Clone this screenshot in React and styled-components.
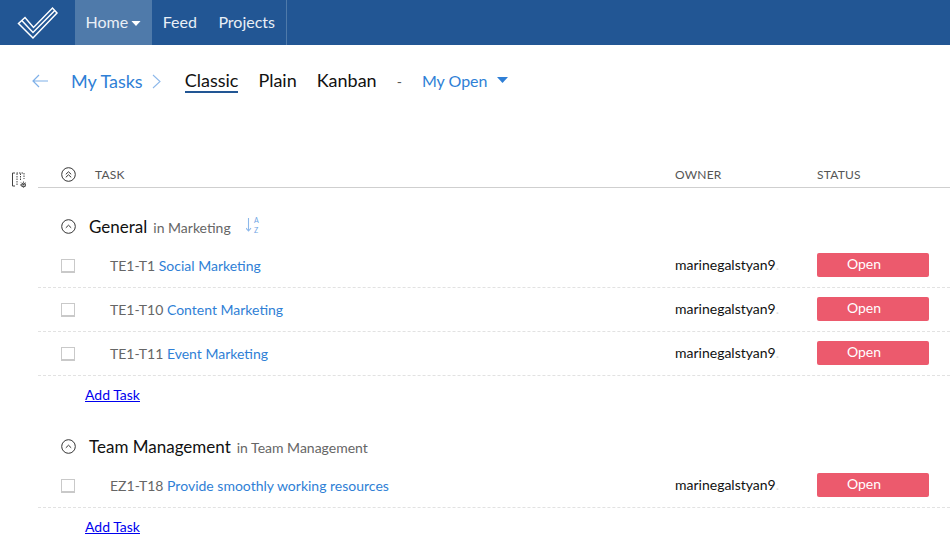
import React from 'react'
import styled, {createGlobalStyle} from 'styled-components'

const Global = createGlobalStyle`
  html, body { margin: 0; padding: 0; background: #fff; overflow: hidden; }
  body { font-family: Lato, "Liberation Sans", sans-serif; }
  * { box-sizing: border-box; }
`

const groups = [
  {
    name: 'General',
    project: 'Marketing',
    sort: true,
    tasks: [
      {id: 'TE1-T1', title: 'Social Marketing'},
      {id: 'TE1-T10', title: 'Content Marketing'},
      {id: 'TE1-T11', title: 'Event Marketing'},
    ],
  },
  {
    name: 'Team Management',
    project: 'Team Management',
    tasks: [{id: 'EZ1-T18', title: 'Provide smoothly working resources'}],
  },
]

const Logo = () => (
  <svg width="42" height="34" viewBox="0 0 42 34" fill="none" stroke="#fff" strokeWidth="1.5">
    <path d="M1.5 17.5 L16 32 L40 7 L35.5 2 L16.5 21.5 L8 11.5 Z" />
    <path d="M4.8 14.5 L16 26.5 L37.8 4.5" />
  </svg>
)

const Caret = ({color, w = 11, h = 6}) => (
  <svg width={w} height={h} viewBox="0 0 11 6"><path d="M0 0 H11 L5.5 6 Z" fill={color} /></svg>
)

const CollapseIcon = ({double}) => (
  <svg width="15" height="15" viewBox="0 0 15 15" fill="none" stroke="#333" strokeWidth="1">
    <circle cx="7.5" cy="7.5" r="6.8" />
    <path d={double ? 'M4.8 7.3 L7.5 4.8 L10.2 7.3 M4.8 10.3 L7.5 7.8 L10.2 10.3' : 'M4.8 8.8 L7.5 6.2 L10.2 8.8'} />
  </svg>
)

const ColumnsIcon = () => (
  <svg width="18" height="18" viewBox="0 0 18 18" fill="none" stroke="#444" strokeWidth="1">
    <path d="M4 1 H1.5 V14 H4" />
    <path d="M6 1.5 V13 M9.5 1.5 V9" strokeDasharray="1.5 1" />
    <path d="M5.5 1 H13 V7" strokeDasharray="1.5 1" />
    <circle cx="12.5" cy="13" r="1.9" />
    <path d="M12.5 9.5 V16.5 M9 13 H16 M10 10.5 L15 15.5 M15 10.5 L10 15.5" strokeWidth="0.9" strokeDasharray="1.2 1.2" />
  </svg>
)

const SortIcon = () => (
  <svg width="16" height="17" viewBox="0 0 16 17" fill="none" stroke="#8db8ea" strokeWidth="1.1">
    <path d="M2.5 1 V14 M0 11.2 L2.5 14 L5 11.2" />
    <SortLetter x="8" y="6">A</SortLetter>
    <SortLetter x="8" y="15.5">Z</SortLetter>
  </svg>
)

const App = () => {
  return (
    <Page>
      <Global />
      <TopBar>
        <LogoCell><Logo /></LogoCell>
        <NavItem $active>Home <NavCaret><Caret color="#fff" w={10} h={5} /></NavCaret></NavItem>
        <NavItem>Feed</NavItem>
        <NavItem $last>Projects</NavItem>
      </TopBar>

      <Crumbs>
        <BackArrow>
          <svg width="16" height="14" viewBox="0 0 16 14" fill="none" stroke="#7fb0e8" strokeWidth="1.2">
            <path d="M16 7 H1 M7 1 L1 7 L7 13" />
          </svg>
        </BackArrow>
        <CrumbLink>My Tasks</CrumbLink>
        <Chevron>
          <svg width="9" height="15" viewBox="0 0 9 15" fill="none" stroke="#8db8ea" strokeWidth="1.1">
            <path d="M1 1 L8 7.5 L1 14" />
          </svg>
        </Chevron>
        <ViewTab $active>Classic</ViewTab>
        <ViewTab>Plain</ViewTab>
        <ViewTab>Kanban</ViewTab>
        <Dash>-</Dash>
        <FilterLink>My Open <Caret color="#2f7fd6" /></FilterLink>
      </Crumbs>

      <Board>
        <SideTool><ColumnsIcon /></SideTool>
        <Table>
          <HeadRow>
            <HeadIcon><CollapseIcon double /></HeadIcon>
            <TaskHead>Task</TaskHead>
            <OwnerHead>Owner</OwnerHead>
            <HeadLabel>Status</HeadLabel>
          </HeadRow>

          {groups.map((g, i) => (
            <Group key={g.name} $first={i === 0}>
              <GroupTitle>
                <CollapseIcon />
                <GroupName>{g.name}</GroupName>
                <GroupProject>in {g.project}</GroupProject>
                {g.sort && <SortWrap><SortIcon /></SortWrap>}
              </GroupTitle>
              {g.tasks.map((t) => (
                <Row key={t.id}>
                  <Check />
                  <TaskCell>
                    <TaskId>{t.id}</TaskId> <TaskName>{t.title}</TaskName>
                  </TaskCell>
                  <Owner>marinegalstyan9<Fade>.</Fade></Owner>
                  <Status>Open</Status>
                </Row>
              ))}
              <AddTask href="#">Add Task</AddTask>
            </Group>
          ))}
        </Table>
      </Board>
    </Page>
  )
}

export default App

const Page = styled.div`
  width: 950px;
  height: 560px;
  overflow: hidden;
`
const TopBar = styled.div`
  display: flex;
  height: 45px;
  background: #225694;
`
const LogoCell = styled.div`
  width: 75px;
  display: flex;
  align-items: center;
  padding-left: 17px;
`
const NavItem = styled.div`
  display: flex;
  align-items: center;
  gap: 3px;
  padding: 0 11px 3px 10.5px;
  font-size: 16px;
  color: #e9eff6;
  background: ${(p) => (p.$active ? '#4f7aaa' : 'transparent')};
  border-right: ${(p) => (p.$last ? '1px solid #4f7aaa' : 'none')};
`
const NavCaret = styled.span`
  display: flex;
  margin-top: 5px;
`
const Crumbs = styled.div`
  display: flex;
  align-items: center;
  height: 72px;
  padding-left: 32px;
`
const BackArrow = styled.span`
  display: flex;
  width: 39px;
`
const CrumbLink = styled.span`
  font-size: 18px;
  color: #2f7fd6;
`
const Chevron = styled.span`
  display: flex;
  margin: 0 24px 0 9px;
`
const ViewTab = styled.span`
  font-size: 18px;
  line-height: 20px;
  color: #111;
  margin-right: 20px;
  padding-top: 1px;
  padding-bottom: 1px;
  border-bottom: 2px solid ${(p) => (p.$active ? '#225694' : 'transparent')};
`
const Dash = styled.span`
  font-size: 14px;
  color: #555;
  margin: 0 20px 0 0;
`
const FilterLink = styled.span`
  display: flex;
  align-items: center;
  gap: 9px;
  padding-bottom: 2px;
  font-size: 16px;
  color: #2f7fd6;
`
const Board = styled.div`
  display: flex;
  padding-top: 47px;
`
const SideTool = styled.div`
  width: 38px;
  padding: 8px 0 0 11px;
`
const Table = styled.div`
  flex: 1;
`
const HeadRow = styled.div`
  display: flex;
  align-items: center;
  height: 24px;
  padding: 0 0 3px 23px;
  border-bottom: 1px solid #cfcfcf;
`
const HeadIcon = styled.span`
  display: flex;
  width: 34px;
`
const HeadLabel = styled.span`
  font-size: 12px;
  letter-spacing: 0.2px;
  text-transform: uppercase;
  color: #555;
`
const TaskHead = styled(HeadLabel)`
  width: 580px;
`
const OwnerHead = styled(HeadLabel)`
  width: 142px;
`
const Group = styled.div`
  margin-top: ${(p) => (p.$first ? '20px' : '25px')};
`
const GroupTitle = styled.div`
  display: flex;
  align-items: center;
  height: 36px;
  padding-left: 23px;
`
const GroupName = styled.span`
  margin-left: 13px;
  font-size: 17px;
  color: #111;
`
const GroupProject = styled.span`
  margin-left: 6px;
  margin-top: 2px;
  font-size: 14px;
  color: #666;
`
const SortWrap = styled.span`
  display: flex;
  margin: 0 0 2px 15px;
`
const SortLetter = styled.text`
  font-family: Lato, "Liberation Sans", sans-serif;
  font-size: 7px;
  fill: #6fa5e4;
  stroke: none;
`
const Row = styled.div`
  display: flex;
  align-items: center;
  height: 44px;
  padding-left: 23px;
  border-bottom: 1px dashed #e2e2e2;
`
const Check = styled.span`
  width: 14px;
  height: 14px;
  border: 1px solid #c9c9c9;
  border-bottom-width: 2px;
  background: #fff;
  margin-right: 35px;
`
const TaskCell = styled.div`
  width: 565px;
  font-size: 14px;
`
const TaskId = styled.span`
  color: #666;
`
const TaskName = styled.span`
  color: #2f7fd6;
`
const Owner = styled.div`
  width: 142px;
  padding-bottom: 2px;
  font-size: 14px;
  color: #111;
`
const Fade = styled.span`
  color: #ddd;
`
const Status = styled.div`
  width: 112px;
  height: 24px;
  border-radius: 2px;
  background: #ec5a6d;
  color: #fff;
  font-size: 14px;
  line-height: 22px;
  text-align: center;
  padding-right: 18px;
  margin-top: -2px;
`
const AddTask = styled.a`
  display: block;
  margin: 10px 0 0 47px;
  width: max-content;
  font-size: 14px;
  line-height: 17px;
  color: #0000ee;
`
